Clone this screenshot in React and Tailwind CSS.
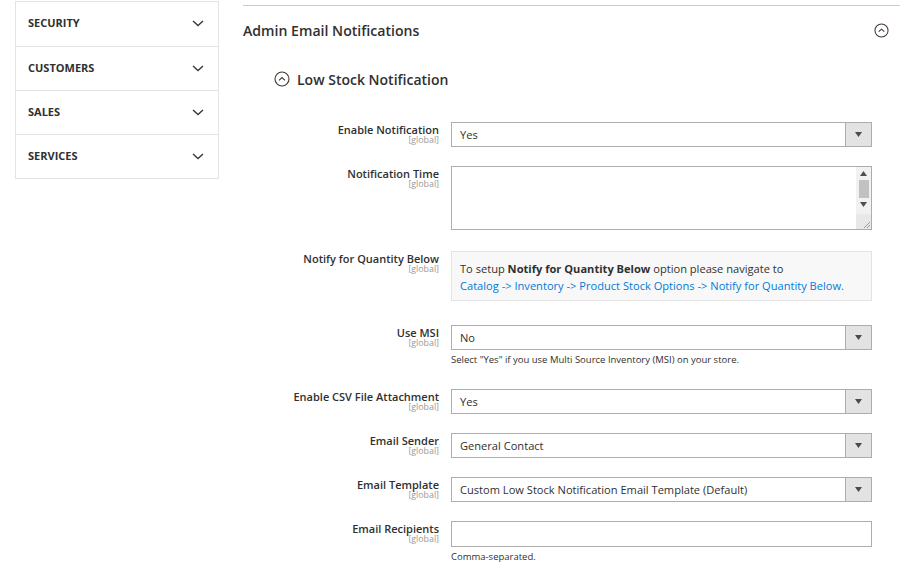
import React from 'react';

const font = { fontFamily: '"Open Sans", "Liberation Sans", sans-serif' };

function Chevron() {
  return (
    <svg width="12" height="7" viewBox="0 0 12 7" className="text-[#41362f]">
      <path d="M1 1 L6 5.5 L11 1" fill="none" stroke="currentColor" strokeWidth="1.4" />
    </svg>
  );
}

function CircleUp({ size = 15 }) {
  return (
    <svg width={size} height={size} viewBox="0 0 16 16">
      <circle cx="8" cy="8" r="7" fill="none" stroke="#41362f" strokeWidth="1.1" />
      <path d="M5 9.3 L8 6.5 L11 9.3" fill="none" stroke="#41362f" strokeWidth="1.1" />
    </svg>
  );
}

function Label({ text }) {
  return (
    <div className="w-[196px] shrink-0 text-right pt-[2px]">
      <div className="text-[11px] leading-[12px] font-semibold text-[#303030]">{text}</div>
      <div className="text-[8.8px] leading-[8px] text-[#999]">[global]</div>
    </div>
  );
}

function Select({ value }) {
  return (
    <div className="flex h-[25px] border border-[#adadad] bg-white">
      <div className="flex-1 flex items-center pl-[8px] pt-[2px] text-[11.1px] text-[#303030]">{value}</div>
      <div className="w-[26px] flex items-center justify-center bg-[#e3e3e3] border-l border-[#adadad]">
        <svg width="7" height="5" viewBox="0 0 7 5">
          <path d="M0 0 L7 0 L3.5 5 Z" fill="#514943" />
        </svg>
      </div>
    </div>
  );
}

function Row({ label, children, className = '' }) {
  return (
    <div className={'flex ' + className}>
      <Label text={label} />
      <div className="ml-[12px] w-[421px]">{children}</div>
    </div>
  );
}

export default function App() {
  const nav = ['SECURITY', 'CUSTOMERS', 'SALES', 'SERVICES'];
  return (
    <div className="w-[922px] h-[576px] bg-white overflow-hidden flex" style={font}>
      <div className="ml-[15px] mt-[1px] w-[204px] self-start border border-[#e3e3e3]">
        {nav.map((n, i) => (
          <div
            key={n}
            className={'h-[44px] flex items-center justify-between pl-[12px] pr-[14px] pb-[1px] ' + (i > 0 ? 'border-t border-[#e3e3e3]' : '')}
          >
            <span className="text-[11px] font-bold text-[#303030]">{n}</span>
            <Chevron />
          </div>
        ))}
      </div>

      <div className="ml-[24px] w-[657px]">
        <div className="mt-[5px] border-t border-[#cccccc]" />
        <div className="h-[49px] flex items-center justify-between pr-[11px]">
          <span className="text-[14.1px] font-semibold text-[#303030]">Admin Email Notifications</span>
          <CircleUp size={15} />
        </div>
        <div className="mt-[9px] h-[30px] flex items-center ml-[31px] gap-[7px]">
          <CircleUp size={16} />
          <span className="text-[14px] font-semibold text-[#303030]">Low Stock Notification</span>
        </div>

        <div className="mt-[28px]">
          <Row label="Enable Notification" className="mb-[19px]">
            <Select value="Yes" />
          </Row>

          <Row label="Notification Time" className="mb-[21px]">
            <div className="h-[64px] border border-[#adadad] flex justify-end">
              <div className="w-[15px] bg-[#f1f1f1] flex flex-col items-center">
                <svg width="7" height="5" viewBox="0 0 7 5" className="mt-[4px]">
                  <path d="M0 5 L7 5 L3.5 0 Z" fill="#505050" />
                </svg>
                <div className="mt-[4px] w-[10px] h-[18px] bg-[#c1c1c1]" />
                <svg width="7" height="5" viewBox="0 0 7 5" className="mt-[4px]">
                  <path d="M0 0 L7 0 L3.5 5 Z" fill="#505050" />
                </svg>
                <div className="mt-auto w-[15px] h-[15px] bg-[#e8e8e8] flex items-end justify-end">
                  <svg width="10" height="10" viewBox="0 0 10 10">
                    <path d="M9 3 L3 9 M9 6 L6 9" stroke="#888" strokeWidth="0.8" />
                  </svg>
                </div>
              </div>
            </div>
          </Row>

          <Row label="Notify for Quantity Below" className="mb-[24px]">
            <div className="h-[50px] border border-[#e3e3e3] bg-[#f8f8f8] px-[8px] pt-[8px] text-[11.1px] leading-[17px] text-[#303030]">
              <div>
                To setup <span className="font-bold">Notify for Quantity Below</span> option please navigate to
              </div>
              <div className="text-[#007bdb]">
                Catalog -&gt; Inventory -&gt; Product Stock Options -&gt; Notify for Quantity Below.
              </div>
            </div>
          </Row>

          <Row label="Use MSI" className="mb-[23px]">
            <Select value="No" />
            <div className="mt-[4px] text-[9.5px] leading-[12px] text-[#303030]">
              Select "Yes" if you use Multi Source Inventory (MSI) on your store.
            </div>
          </Row>

          <Row label="Enable CSV File Attachment" className="mb-[19px]">
            <Select value="Yes" />
          </Row>

          <Row label="Email Sender" className="mb-[19px]">
            <Select value="General Contact" />
          </Row>

          <Row label="Email Template" className="mb-[19px]">
            <Select value="Custom Low Stock Notification Email Template (Default)" />
          </Row>

          <Row label="Email Recipients">
            <div className="h-[26px] border border-[#adadad] bg-white" />
            <div className="mt-[4px] text-[9.5px] leading-[12px] text-[#303030]">Comma-separated.</div>
          </Row>
        </div>
      </div>
    </div>
  );
}
